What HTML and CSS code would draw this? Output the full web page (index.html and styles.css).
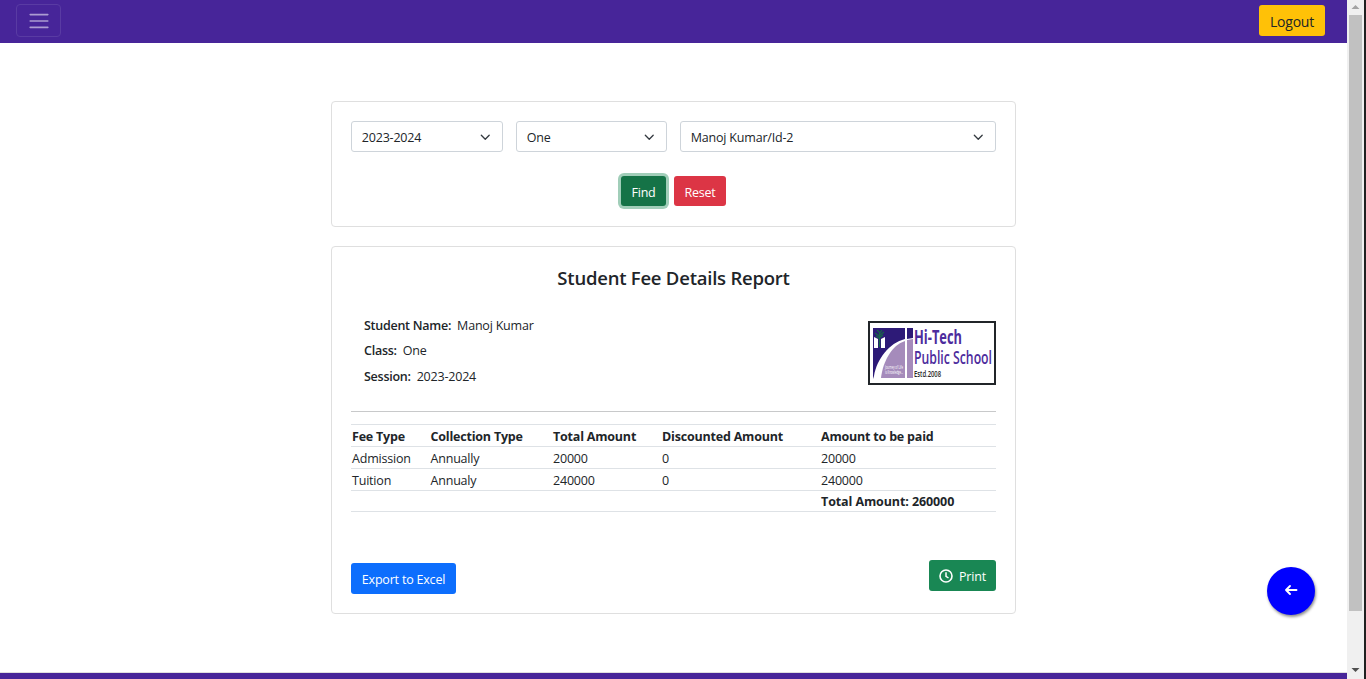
FILE: index.html
```html
<!DOCTYPE html>
<html lang="en">
<head>
<meta charset="utf-8">
<title>Student Fee Details Report</title>
<link rel="stylesheet" href="styles.css">
</head>
<body>
<div class="window">
  <div class="page">
    <header class="navbar">
      <button class="toggler" aria-label="Menu"><svg width="24" height="24" viewBox="0 0 30 30"><path stroke="rgba(255,255,255,.55)" stroke-linecap="round" stroke-miterlimit="10" stroke-width="2" d="M4 7h22M4 15h22M4 23h22"/></svg></button>
      <button class="btn btn-logout">Logout</button>
    </header>
    <main class="content">
      <section class="card filter">
        <div class="selects">
          <div class="select"><span>2023-2024</span><svg class="chevron" viewBox="0 0 16 16"><path d="m2 5 6 6 6-6"/></svg></div>
          <div class="select"><span>One</span><svg class="chevron" viewBox="0 0 16 16"><path d="m2 5 6 6 6-6"/></svg></div>
          <div class="select"><span class="student">Manoj Kumar/Id-2</span><svg class="chevron" viewBox="0 0 16 16"><path d="m2 5 6 6 6-6"/></svg></div>
        </div>
        <div class="actions">
          <button class="btn btn-find">Find</button>
          <button class="btn btn-reset">Reset</button>
        </div>
      </section>
      <section class="card report">
        <h1 class="title"><span>Student Fee Details Report</span></h1>
        <div class="summary">
          <dl class="details">
            <div class="detail"><dt>Student Name:</dt><dd>Manoj Kumar</dd></div>
            <div class="detail"><dt>Class:</dt><dd>One</dd></div>
            <div class="detail"><dt>Session:</dt><dd>2023-2024</dd></div>
          </dl>
          <svg class="logo" viewBox="0 0 128 64">
            <rect x="1" y="1" width="126" height="62" fill="#fff" stroke="#212529" stroke-width="2"/>
            <path d="M5 7h32v11C21 22 9 38 6 55L5 58z" fill="#2d1a77"/>
            <path d="M13 57C15 40 24 24 37 20v37z" fill="#a58bbb"/>
            <path d="M39 7h6v10l-6 1z" fill="#2d1a77"/>
            <path d="M39 19l6-1v39h-6z" fill="#a58bbb"/>
            <path d="M6 16l4 2v9H6zM13 18l4-2v11h-4z" fill="#fff"/>
            <path d="M11.500 26V12M8 15l3 2 4-3M7 12l4 3 5-4M9 9l3 3 2-3" stroke="#176547" stroke-width="1.300" fill="none"/>
            <text class="logo-tiny" x="17" y="47.500" textLength="18" lengthAdjust="spacingAndGlyphs">Journey of Life</text>
            <text class="logo-tiny" x="17" y="52.500" textLength="18" lengthAdjust="spacingAndGlyphs">is Knowledge...</text>
            <text class="logo-name" x="46" y="22.500" textLength="48" lengthAdjust="spacingAndGlyphs">Hi-Tech</text>
            <text class="logo-sub" x="46" y="42.500" textLength="78" lengthAdjust="spacingAndGlyphs">Public School</text>
            <text class="logo-estd" x="46" y="56" textLength="27" lengthAdjust="spacingAndGlyphs">Estd.2008</text>
          </svg>
        </div>
        <hr class="rule">
        <table class="fees">
          <colgroup><col class="c1"><col class="c2"><col class="c3"><col class="c4"><col class="c5"></colgroup>
          <tr><th>Fee Type</th><th>Collection Type</th><th>Total Amount</th><th>Discounted Amount</th><th>Amount to be paid</th></tr>
          <tr><td>Admission</td><td>Annually</td><td>20000</td><td>0</td><td>20000</td></tr>
          <tr><td>Tuition</td><td>Annualy</td><td>240000</td><td>0</td><td>240000</td></tr>
          <tr class="total"><td></td><td></td><td></td><td></td><th>Total Amount: 260000</th></tr>
        </table>
        <div class="report-actions">
          <button class="btn btn-export">Export to Excel</button>
          <button class="btn btn-print"><svg width="14" height="14" viewBox="0 0 14 14" fill="none" stroke="#fff"><circle cx="7" cy="7" r="6" stroke-width="1.600"/><path d="M7 3.200V7.300L9.500 9" stroke-width="1.500"/></svg><span>Print</span></button>
        </div>
      </section>
    </main>
    <footer class="footer"></footer>
    <button class="back" aria-label="Back"><svg width="14" height="12" viewBox="0 0 14 12" fill="none" stroke="#fff" stroke-width="1.900" stroke-linecap="round" stroke-linejoin="round"><path d="M6 2L2 6l4 4M2 6h10.500"/></svg></button>
  </div>
  <div class="scrollbar">
    <svg width="17" height="15" viewBox="0 0 17 15"><path d="M4.500 9L8.500 5l4 4z" fill="#a3a3a3"/></svg>
    <div class="thumb"></div>
    <svg class="down" width="17" height="17" viewBox="0 0 17 17"><path d="M4.500 6h8l-4 4z" fill="#505050"/></svg>
  </div>
  <div class="edge"></div>
</div>
</body>
</html>
```
FILE: styles.css
```css
* { box-sizing: border-box; }
body {
  margin: 0;
  font-family: "Open Sans", "Noto Sans", sans-serif;
  font-size: 12.5px;
  letter-spacing: -0.2px;
  color: #212529;
  background: #fff;
}
button { font: inherit; letter-spacing: inherit; padding: 0; border: 0; }
.window { display: flex; width: 1366px; height: 679px; overflow: hidden; }
.page { position: relative; display: flex; flex-direction: column; width: 1347px; }
.navbar {
  display: flex;
  justify-content: space-between;
  align-items: flex-start;
  height: 43px;
  padding: 4px 22px 0 16px;
  background: #472599;
}
.toggler {
  display: flex;
  align-items: center;
  justify-content: center;
  width: 45px;
  height: 33px;
  border: 1px solid #593ba3;
  border-radius: 4px;
  background: none;
}
.btn {
  display: flex;
  align-items: center;
  justify-content: center;
  height: 31px;
  padding-top: 2px;
  border-radius: 3px;
  color: #fff;
}
.btn-logout { width: 66px; margin-top: 1px; padding-top: 1px; background: #ffc107; color: #212529; font-size: 14px; }
.content { flex: 1; width: 685px; margin: 0 auto 0 331px; padding-top: 58px; }
.card { padding: 19px; border: 1px solid #dfdfdf; border-radius: 4px; }
.filter { height: 126px; margin-bottom: 19px; }
.selects { display: grid; grid-template-columns: 152px 151px 316px; gap: 13px; }
.select {
  display: flex;
  align-items: center;
  justify-content: space-between;
  height: 31px;
  padding: 2px 11.500px 0 9.800px;
  border: 1px solid #ced4da;
  border-radius: 3px;
}
.chevron { width: 10.500px; height: 10.500px; margin-top: -1px; fill: none; stroke: #343a40; stroke-width: 2; stroke-linecap: round; stroke-linejoin: round; }
.actions { display: flex; justify-content: center; gap: 8px; margin-top: 24px; }
.actions .btn { height: 30px; }
.btn-find { width: 45px; background: #157347; box-shadow: 0 0 0 3px #a1ceb9; }
.btn-reset { width: 52px; background: #dc3545; }
.report { height: 368px; }
.title { margin: 0; font-size: 18.5px; line-height: 24px; font-weight: 550; letter-spacing: -0.23px; text-align: center; }
.summary { display: flex; justify-content: space-between; padding: 31px 0 0 13px; height: 121px; }
.details { display: flex; flex-direction: column; gap: 7.500px; margin: -4.300px 0 0; }
.detail { display: flex; gap: 6px; line-height: 18px; }
dt { font-weight: 550; letter-spacing: -0.26px; }
dd { margin: 0; }
.logo { width: 128px; height: 64px; }
.logo text { letter-spacing: 0; font-family: "Open Sans", sans-serif; }
.logo .logo-tiny { font-size: 4.500px; fill: #fff; }
.logo .logo-name { font-size: 19px; font-weight: 700; fill: #4d2c9d; }
.logo .logo-sub { font-size: 18px; font-weight: 600; fill: #4d2c9d; }
.logo .logo-estd { font-size: 8px; font-weight: 600; fill: #222; }
.rule { height: 1px; margin: 0 0 12px; border: 0; background: #c8c9ca; }
.fees { width: 645px; table-layout: fixed; border-collapse: separate; border-spacing: 0; border-top: 1px solid #dee2e6; }
.c1 { width: 78.500px; }
.c2 { width: 122.500px; }
.c3 { width: 109px; }
.c4 { width: 159px; }
.c5 { width: 176px; }
.fees th, .fees td { height: 22px; padding: 3px 0 0 1px; line-height: 18px; text-align: left; white-space: nowrap; border-bottom: 1px solid #dee2e6; }
.fees th { font-weight: 700; }
.fees .total th, .fees .total td { height: 21px; padding-top: 2px; }
.fees .total th { letter-spacing: -0.1px; }
.report-actions { display: flex; justify-content: space-between; margin-top: 48px; }
.btn-export { width: 105px; margin-top: 3px; background: #0d6efd; }
.btn-print { width: 67px; gap: 6px; background: #198754; }
.btn-print svg { margin-top: -1px; }
.footer { height: 7px; border-top: 1px solid #dfdfdf; background: #472599; }
.back {
  position: absolute;
  left: 1267px;
  top: 567px;
  display: flex;
  align-items: center;
  justify-content: center;
  width: 48px;
  height: 48px;
  padding-bottom: 2px;
  border-radius: 50%;
  background: #00f;
  box-shadow: 1px 2px 3px rgba(0,0,0,.45);
}
.scrollbar { display: flex; flex-direction: column; width: 17px; background: #f0f0f0; }
.thumb { width: 13px; height: 596px; margin-left: 2px; background: #c1c1c1; }
.down { margin-top: auto; }
.edge { width: 2px; background: #202020; }
```
